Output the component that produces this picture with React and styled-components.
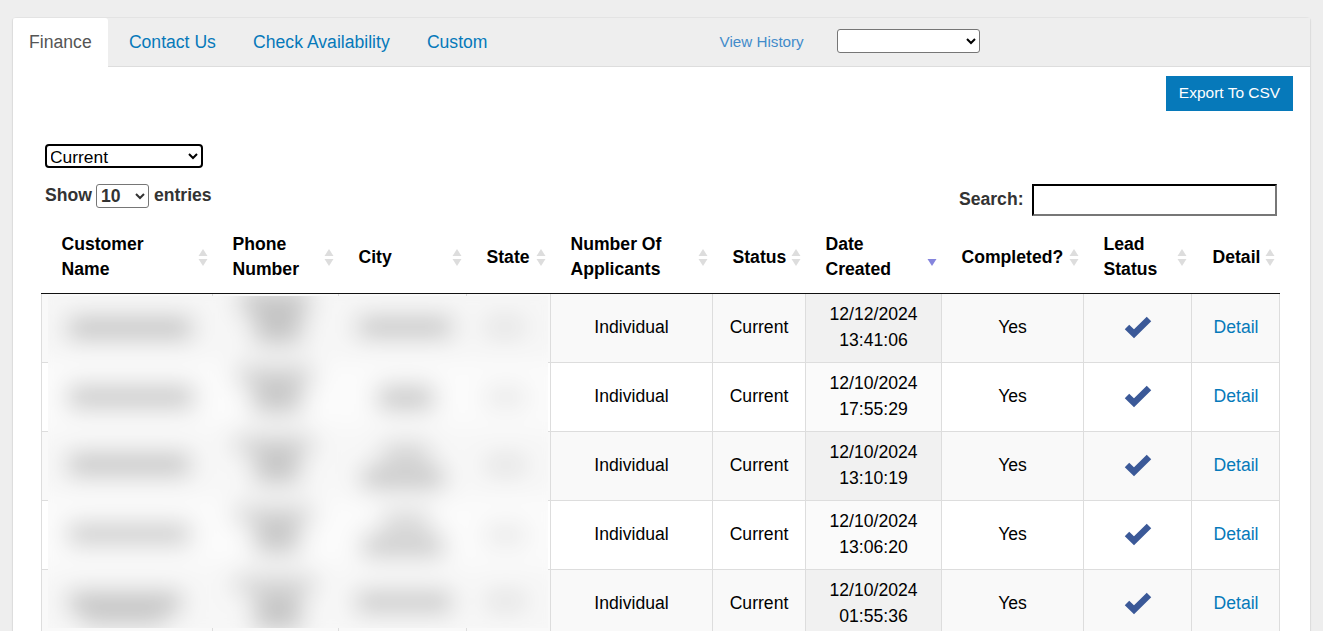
import styled, { createGlobalStyle } from 'styled-components';

const GlobalStyle = createGlobalStyle`
  html, body {
    margin: 0;
    height: 100%;
    overflow: hidden;
    background: #eee;
    font-family: "Liberation Sans", Arial, sans-serif;
  }
`;

const Page = styled.div`
  padding: 18px 13px 0;
`;

const Card = styled.div`
  background: #fff;
  box-shadow: -1px 0 1px rgba(0, 0, 0, 0.08), 1px 0 1px rgba(0, 0, 0, 0.08), 0 -1px 1px rgba(0, 0, 0, 0.03);
  border-radius: 3px 3px 0 0;
`;

const TabBar = styled.div`
  display: flex;
  align-items: stretch;
  gap: 5px;
  height: 48px;
  background: #eee;
  border-bottom: 1px solid #ddd;
`;

const Tab = styled.a`
  display: flex;
  align-items: center;
  padding: 0 16.1px;
  height: ${p => (p.$active ? '49px' : '48px')};
  font-size: 17.6px;
  color: ${p => (p.$active ? '#555' : '#0679ba')};
  background: ${p => (p.$active ? '#fff' : 'transparent')};
  border-radius: 3px 3px 0 0;
`;

const History = styled.div`
  display: flex;
  align-items: center;
  gap: 33px;
  margin-left: 211px;
`;

const HistoryLink = styled.a`
  margin-top: -2px;
  font-size: 15.2px;
  color: #428bca;
`;

const HistorySelect = styled.select`
  width: 143px;
  height: 24px;
  margin-top: -2px;
  background: #fff;
  border: 1px solid #767676;
  border-radius: 3px;
`;

const Body = styled.div`
  padding: 9px 30px 0 28px;
`;

const ExportRow = styled.div`
  display: flex;
  justify-content: flex-end;
  margin-right: -13px;
`;

const ExportButton = styled.button`
  width: 127px;
  height: 35px;
  padding: 0 0 2px;
  border: 0;
  background: #0679ba;
  color: #fff;
  font-family: inherit;
  font-size: 15.5px;
`;

const StatusSelect = styled.select`
  display: block;
  width: 158px;
  height: 24px;
  margin: 33px 0 16px 4px;
  padding: 0 0 3px;
  text-indent: -1px;
  background: #fff;
  color: #000;
  border: 2px solid #000;
  border-radius: 4px;
  font-family: inherit;
  font-size: 17.4px;
`;

const Controls = styled.div`
  display: flex;
  justify-content: space-between;
  align-items: flex-start;
  margin: 0 3px 4px 4px;
  font-size: 17.6px;
  font-weight: 700;
  color: #333;
`;

const Entries = styled.label`
  display: flex;
  align-items: flex-start;
  gap: 4px;
  line-height: 22px;
`;

const EntriesSelect = styled.select`
  width: 53px;
  height: 24px;
  margin-right: 1px;
  padding: 0;
  background: #fff;
  color: #333;
  border: 1px solid #767676;
  border-radius: 3px;
  font-family: inherit;
  font-size: 17.6px;
  font-weight: 700;
`;

const SearchLabel = styled.label`
  display: flex;
  align-items: center;
  gap: 8.5px;
  height: 32px;
`;

const SearchText = styled.span`
  margin-top: -2px;
`;

const SearchInput = styled.input`
  box-sizing: border-box;
  width: 245px;
  height: 32px;
  border-width: 2px;
  border-style: inset;
  border-color: #222 #777 #777 #222;
  background: #fff;
`;

const TableWrap = styled.div`
  position: relative;
`;

const Table = styled.table`
  width: 1239px;
  table-layout: fixed;
  border-collapse: collapse;
  font-size: 17.6px;
  color: #000;
`;

const HeadCell = styled.th`
  position: relative;
  height: 73px;
  padding: 2px 20px 0 20px;
  box-sizing: border-box;
  border-bottom: 1px solid #111;
  text-align: left;
  line-height: 25px;
  font-weight: 700;
  color: #000;

  &:last-child {
    padding-left: 21px;
  }
`;

const SortArrows = styled.svg`
  position: absolute;
  top: 29px;
  right: 5px;
  width: 10px;
  height: 17px;
`;

const Row = styled.tr`
  background: ${p => (p.$odd ? '#f9f9f9' : '#fff')};
`;

const Cell = styled.td`
  height: 69px;
  padding: 0 8px;
  box-sizing: border-box;
  border: 1px solid #ddd;
  text-align: center;
  line-height: 25.6px;
  background: ${p => (p.$sorted ? (p.$odd ? '#f1f1f1' : '#fafafa') : 'transparent')};

  &:last-child {
    padding-left: 9px;
  }
`;

const DetailLink = styled.a`
  color: #0679ba;
`;

const Redaction = styled.svg`
  position: absolute;
  top: 76px;
  left: 7px;
  width: 500px;
  height: 332px;
`;

const CheckMark = styled.svg`
  display: block;
  width: 30px;
  height: 24px;
  margin: -1px auto 0;
`;

const columns = [
  { width: 171, label: <>Customer<br />Name</> },
  { width: 126, label: <>Phone<br />Number</> },
  { width: 128, label: 'City' },
  { width: 84, label: 'State' },
  { width: 162, label: <>Number Of<br />Applicants</> },
  { width: 93, label: 'Status' },
  { width: 136, label: <>Date<br />Created</>, sorted: true },
  { width: 142, label: 'Completed?' },
  { width: 108, label: <>Lead<br />Status</> },
  { width: 88, label: 'Detail' },
];

const rows = [
  ['12/12/2024', '13:41:06'],
  ['12/10/2024', '17:55:29'],
  ['12/10/2024', '13:10:19'],
  ['12/10/2024', '13:06:20'],
  ['12/10/2024', '01:55:36'],
];

// x, y, w, h, fill of the smudges, in page px minus the overlay origin
const smudges = [
  [20, 22, 124, 20, '#bcbcbc'], [192, -6, 70, 24, '#c6c6c6'], [206, 14, 48, 34, '#c4c4c4'], [310, 22, 94, 18, '#bcbcbc'], [438, 22, 38, 18, '#e0e0e0'],
  [20, 90, 126, 22, '#c4c4c4'], [188, 70, 78, 18, '#d0d0d0'], [204, 84, 50, 34, '#c8c8c8'], [330, 90, 56, 24, '#c6c6c6'], [438, 92, 40, 18, '#e6e6e6'],
  [20, 158, 122, 21, '#c0c0c0'], [186, 140, 80, 16, '#cecece'], [206, 154, 46, 34, '#c6c6c6'], [334, 148, 48, 18, '#cccccc'], [314, 172, 82, 20, '#c0c0c0'], [438, 160, 40, 18, '#e0e0e0'],
  [20, 228, 122, 20, '#c6c6c6'], [186, 210, 80, 16, '#d0d0d0'], [206, 224, 46, 34, '#c8c8c8'], [334, 216, 48, 18, '#d0d0d0'], [314, 240, 82, 20, '#c4c4c4'], [438, 230, 40, 18, '#e6e6e6'],
  [20, 296, 114, 20, '#c0c0c0'], [34, 314, 84, 16, '#cccccc'], [186, 280, 82, 16, '#d0d0d0'], [206, 298, 48, 36, '#c4c4c4'], [308, 296, 96, 20, '#c4c4c4'], [438, 296, 40, 18, '#e0e0e0'],
];

function Redacted() {
  return (
    <Redaction viewBox="0 0 500 332">
      <defs>
        <filter id="smudge" x="-10%" y="-10%" width="120%" height="120%">
          <feGaussianBlur stdDeviation="12" />
        </filter>
      </defs>
      <rect width="500" height="332" fill="#f9f9f9" />
      <g filter="url(#smudge)">
        <rect x="-20" y="-20" width="540" height="85" fill="#f6f6f6" />
        <rect x="-20" y="65" width="540" height="65" fill="#fbfbfb" />
        <rect x="-20" y="130" width="540" height="72" fill="#f7f7f7" />
        <rect x="-20" y="202" width="540" height="66" fill="#fbfbfb" />
        <rect x="-20" y="268" width="540" height="84" fill="#f7f7f7" />
        {smudges.map(([x, y, w, h, fill], i) => (
          <rect key={i} x={x} y={y} width={w} height={h} fill={fill} />
        ))}
      </g>
    </Redaction>
  );
}

function SortIcon({ sorted }) {
  return (
    <SortArrows viewBox="0 0 10 17">
      {!sorted && <path d="M5 0 L9.5 7 H0.5 Z" fill="#ddd" />}
      <path d="M0.5 10 H9.5 L5 17 Z" fill={sorted ? '#8585dd' : '#ddd'} />
    </SortArrows>
  );
}

function Check() {
  return (
    <CheckMark viewBox="0 0 30 24">
      <path d="M4 12 L11 18.8 L26 4" fill="none" stroke="#3b5998" strokeWidth="6.4" />
    </CheckMark>
  );
}

export default function App() {
  return (
    <Page>
      <GlobalStyle />
      <Card>
        <TabBar>
          <Tab $active>Finance</Tab>
          <Tab>Contact Us</Tab>
          <Tab>Check Availability</Tab>
          <Tab>Custom</Tab>
          <History>
            <HistoryLink>View History</HistoryLink>
            <HistorySelect />
          </History>
        </TabBar>
        <Body>
          <ExportRow>
            <ExportButton>Export To CSV</ExportButton>
          </ExportRow>
          <StatusSelect defaultValue="Current">
            <option>Current</option>
            <option>Archived</option>
          </StatusSelect>
          <Controls>
            <Entries>
              Show
              <EntriesSelect defaultValue="10">
                <option>10</option>
                <option>25</option>
                <option>50</option>
              </EntriesSelect>
              entries
            </Entries>
            <SearchLabel>
              <SearchText>Search:</SearchText>
              <SearchInput />
            </SearchLabel>
          </Controls>
          <TableWrap>
            <Table>
              <colgroup>
                {columns.map((c, i) => <col key={i} style={{ width: c.width }} />)}
              </colgroup>
              <thead>
                <tr>
                  {columns.map((c, i) => (
                    <HeadCell key={i}>
                      {c.label}
                      <SortIcon sorted={c.sorted} />
                    </HeadCell>
                  ))}
                </tr>
              </thead>
              <tbody>
                {rows.map(([date, time], i) => {
                  const odd = i % 2 === 0;
                  return (
                    <Row key={date + time} $odd={odd}>
                      <Cell />
                      <Cell />
                      <Cell />
                      <Cell />
                      <Cell>Individual</Cell>
                      <Cell>Current</Cell>
                      <Cell $sorted $odd={odd}>{date}<br />{time}</Cell>
                      <Cell>Yes</Cell>
                      <Cell><Check /></Cell>
                      <Cell><DetailLink>Detail</DetailLink></Cell>
                    </Row>
                  );
                })}
              </tbody>
            </Table>
            <Redacted />
          </TableWrap>
        </Body>
      </Card>
    </Page>
  );
}
